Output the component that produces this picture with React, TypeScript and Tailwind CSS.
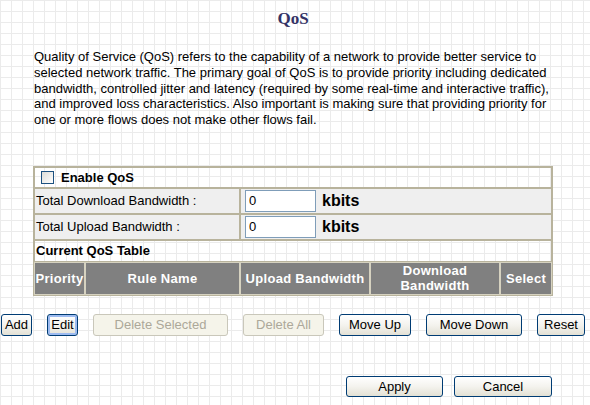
const sans = "font-[family-name:'Liberation_Sans',Arial,sans-serif]";

interface BtnProps {
  label: string;
  className: string;
  disabled?: boolean;
  focused?: boolean;
}

function XpButton({ label, className, disabled, focused }: BtnProps) {
  if (disabled) {
    return (
      <button
        disabled
        className={`${className} ${sans} rounded-[3px] border border-[#c9c7ba] bg-[#f5f4ea] text-[13px] leading-none text-[#aca899]`}
      >
        {label}
      </button>
    );
  }
  return (
    <button
      className={`${className} ${sans} rounded-[3px] border border-[#003c74] bg-gradient-to-b from-white via-[#f4f3ee] to-[#e3e1d5] text-[13px] leading-none text-black ${
        focused ? 'shadow-[inset_0_0_0_2px_#9dbbf0]' : ''
      }`}
    >
      {label}
    </button>
  );
}

export default function App() {
  return (
    <div
      className={`${sans} h-[405px] w-[590px] overflow-hidden bg-white bg-[linear-gradient(to_right,#ebebeb_1px,transparent_1px),linear-gradient(to_bottom,#ebebeb_1px,transparent_1px)] bg-[size:11px_11px] text-black`}
    >
      <div className="ml-[33px] w-[520px] pt-[9px]">
        <h1 className="text-center font-[family-name:'Liberation_Serif',serif] text-[17px] font-bold leading-[20px] text-[#333366]">
          QoS
        </h1>
        <p className="mt-[20px] pl-px text-[13px] leading-[15.75px]">
          Quality of Service (QoS) refers to the capability of a network to provide better service to
          selected network traffic. The primary goal of QoS is to provide priority including dedicated
          bandwidth, controlled jitter and latency (required by some real-time and interactive traffic),
          and improved loss characteristics. Also important is making sure that providing priority for
          one or more flows does not make other flows fail.
        </p>

        <div className="mt-[38px] border border-[#b8b39c]">
          <div className="flex h-[21px] items-center gap-[7px] border border-[#b8b39c] pl-[6px]">
            <span className="block h-[13px] w-[13px] border border-[#1c5180] bg-gradient-to-br from-[#dcdcd7] to-white" />
            <span className="text-[13px] font-bold">Enable QoS</span>
          </div>

          <div className="flex h-[26px]">
            <div className="flex w-[206px] items-center border border-[#b8b39c] bg-[#efefef] pl-px text-[13px]">
              Total Download Bandwidth :
            </div>
            <div className="flex flex-1 items-center gap-[6px] border border-[#b8b39c] bg-[#efefef] pl-[4px]">
              <input
                readOnly
                value="0"
                className="h-[22px] w-[71px] border border-[#7f9db9] bg-white px-[3px] text-[13px] outline-none"
              />
              <span className="text-[16px] font-bold">kbits</span>
            </div>
          </div>

          <div className="flex h-[26px]">
            <div className="flex w-[206px] items-center border border-[#b8b39c] bg-[#efefef] pl-px text-[13px]">
              Total Upload Bandwidth :
            </div>
            <div className="flex flex-1 items-center gap-[6px] border border-[#b8b39c] bg-[#efefef] pl-[4px]">
              <input
                readOnly
                value="0"
                className="h-[22px] w-[71px] border border-[#7f9db9] bg-white px-[3px] text-[13px] outline-none"
              />
              <span className="text-[16px] font-bold">kbits</span>
            </div>
          </div>

          <div className="flex h-[22px] items-center border border-[#b8b39c] pl-px text-[13px] font-bold">
            Current QoS Table
          </div>

          <div className="grid h-[33px] grid-cols-[51px_155px_130px_130px_1fr] text-center text-[13px] font-bold leading-[15px] tracking-[0.3px] text-white">
            <div className="flex items-center justify-center border border-[#d6d2c0] bg-[#808080]">Priority</div>
            <div className="flex items-center justify-center border border-[#d6d2c0] bg-[#808080]">Rule Name</div>
            <div className="flex items-center justify-center border border-[#d6d2c0] bg-[#808080]">Upload Bandwidth</div>
            <div className="flex items-center justify-center border border-[#d6d2c0] bg-[#808080]">
              Download
              <br />
              Bandwidth
            </div>
            <div className="flex items-center justify-center border border-[#d6d2c0] bg-[#808080]">Select</div>
          </div>
        </div>
      </div>

      <div className="mt-[18px] flex gap-[15px] pl-px">
        <XpButton label="Add" className="h-[22px] w-[31px]" />
        <XpButton label="Edit" className="h-[22px] w-[31px]" focused />
        <XpButton label="Delete Selected" className="h-[22px] w-[135px]" disabled />
        <XpButton label="Delete All" className="h-[22px] w-[81px]" disabled />
        <XpButton label="Move Up" className="h-[22px] w-[72px]" />
        <XpButton label="Move Down" className="h-[22px] w-[96px]" />
        <XpButton label="Reset" className="h-[22px] w-[48px]" />
      </div>

      <div className="mt-[40px] flex gap-[11px] pl-[346px]">
        <XpButton label="Apply" className="h-[21px] w-[97px]" />
        <XpButton label="Cancel" className="h-[21px] w-[98px]" />
      </div>
    </div>
  );
}
